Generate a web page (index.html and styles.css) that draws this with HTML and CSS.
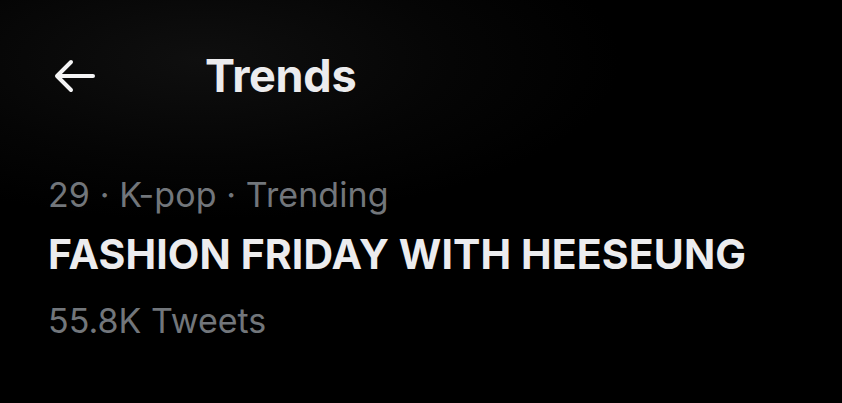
FILE: index.html
```html
<!DOCTYPE html>
<html lang="en">
<head>
<meta charset="utf-8">
<title>Trends</title>
<link rel="stylesheet" href="styles.css">
</head>
<body>
<div class="screen">
  <header class="topbar">
    <button class="back" aria-label="Back">
      <svg width="42" height="34" viewBox="0 0 42 34" fill="none" stroke="#f4f4f5" stroke-width="4" stroke-linecap="round" stroke-linejoin="round">
        <path d="M39 17H4"/>
        <path d="M17 3L3 17L17 31"/>
      </svg>
    </button>
    <h1 class="title">Trends</h1>
  </header>
  <section class="trend">
    <div class="meta">29 · K-pop · Trending</div>
    <div class="name">FASHION FRIDAY WITH HEESEUNG</div>
    <div class="count">55.8K Tweets</div>
  </section>
</div>
</body>
</html>
```

FILE: styles.css
```css
html, body {
  margin: 0;
  padding: 0;
  background: #000;
}
.screen {
  width: 842px;
  height: 403px;
  background: radial-gradient(ellipse 420px 160px at 200px 60px, #0f0f0f 0%, #050505 60%, #000 100%);
  font-family: Inter, "Liberation Sans", sans-serif;
  overflow: hidden;
}
.topbar {
  display: flex;
  align-items: center;
  padding: 49px 0 0 54px;
}
.back {
  background: none;
  border: 0;
  padding: 0;
  width: 42px;
  height: 34px;
  display: flex;
}
.title {
  margin: 0 0 0 109px;
  font-size: 45px;
  line-height: 1.2;
  font-weight: 700;
  color: #ececee;
  letter-spacing: -0.3px;
}
.trend {
  padding: 72px 0 0 48px;
}
.meta {
  font-size: 34px;
  line-height: 1.2;
  color: #72767b;
  letter-spacing: 0.1px;
}
.name {
  margin-top: 14px;
  font-size: 41px;
  line-height: 1.2;
  font-weight: 700;
  color: #ececee;
  letter-spacing: 0.1px;
}
.count {
  margin-top: 22px;
  font-size: 34px;
  line-height: 1.2;
  color: #72767b;
}
```
